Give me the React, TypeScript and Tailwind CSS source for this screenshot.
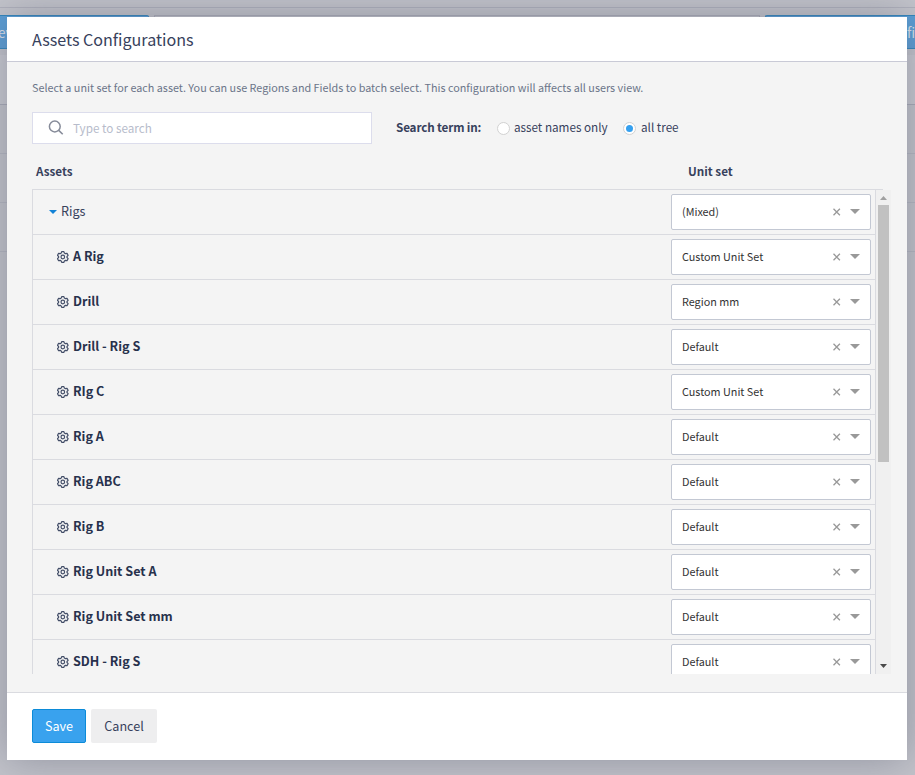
import React from "react";

type Asset = { name: string; unit: string };

const assets: Asset[] = [
  { name: "A Rig", unit: "Custom Unit Set" },
  { name: "Drill", unit: "Region mm" },
  { name: "Drill - Rig S", unit: "Default" },
  { name: "RIg C", unit: "Custom Unit Set" },
  { name: "Rig A", unit: "Default" },
  { name: "Rig ABC", unit: "Default" },
  { name: "Rig B", unit: "Default" },
  { name: "Rig Unit Set A", unit: "Default" },
  { name: "Rig Unit Set mm", unit: "Default" },
  { name: "SDH - Rig S", unit: "Default" },
];

function GearIcon() {
  return (
    <svg className="mt-px h-3 w-3 shrink-0" viewBox="0 0 12 12" fill="none" stroke="#434e68" strokeWidth="1.2" strokeLinejoin="round">
      <path d="M4.700.6h2.200l.5 1.500 1 .6 1.600-.4 1.100 2-1.100 1.200v1l1.100 1.200-1.100 2-1.600-.4-1 .6-.5 1.500H4.700l-.5-1.500-1-.6-1.600.4-1.100-2 1.100-1.200v-1L.5 4.300l1.100-2 1.600.4 1-.6z" />
      <circle cx="5.800" cy="6" r="1.800" />
    </svg>
  );
}

function UnitSelect({ value }: { value: string }) {
  return (
    <div className="flex h-9 w-[200px] shrink-0 items-center rounded-[2px] border border-[#c3c8d3] bg-white pr-[10px] pl-[10px]">
      <span className="flex-1 pb-[2px] text-[10.8px] text-[#333]">{value}</span>
      <svg className="mr-[9px] h-2 w-2" viewBox="0 0 8 8" stroke="#999" strokeWidth="1.3">
        <path d="M.5 .8l6.400 6.400M6.900 .8L.5 7.200" />
      </svg>
      <svg className="mb-px h-[5px] w-[10px]" viewBox="0 0 10 5" fill="#999">
        <path d="M0 0h10L5 5z" />
      </svg>
    </div>
  );
}

function Backdrop() {
  return (
    <div className="absolute inset-0 flex flex-col bg-[#c3c4cb]">
      <div className="h-2 border-b border-[#b0b1bc]" />
      <div className="mt-[7px] flex h-[34px] text-[13.5px] text-[#dfe3ec]">
        <div className="flex w-[149px] shrink-0 items-center rounded-r-[2px] border border-l-0 border-[#3186bd] bg-[#5a9ed6] pb-px">
          <span className="-ml-[2px]">ew</span>
        </div>
        <div className="mx-[5px] w-[606px] shrink-0 border border-[#abacb7]" />
        <div className="flex w-[150px] shrink-0 items-center justify-end rounded-l-[2px] border border-r-0 border-[#3186bd] bg-[#5a9ed6] pb-px">fi</div>
      </div>
      <div className="mt-[6px] h-[50px] border-b border-[#a9abb7] bg-[#c9cad1]" />
      <div className="h-[49px] border-b border-[#b5b7c1]" />
      <div className="h-[49px] border-b border-[#b5b7c1]" />
      <div className="h-[49px] border-b border-[#b5b7c1]" />
    </div>
  );
}

export default function App() {
  return (
    <div className="relative h-[775px] w-[915px] overflow-hidden font-['Noto_Sans_CJK_SC',sans-serif] text-[12.6px] leading-5 text-[#37415c]">
      <Backdrop />
      <div className="absolute top-[17px] left-[7px] flex h-[743px] w-[900px] flex-col bg-white shadow-[0_0_40px_rgba(80,85,105,0.45)]">
        <header className="flex h-[45px] shrink-0 items-center border-b border-[#c9cad6] px-[25px] text-[16.1px]">
          Assets Configurations
        </header>
        <main className="flex flex-1 flex-col bg-[#f4f4f4] pl-[25px]">
          <p className="mt-[15px] text-[10.8px] text-[#6b7489]">
            Select a unit set for each asset. You can use Regions and Fields to batch select. This configuration will affects all users view.
          </p>
          <div className="mt-[15px] flex h-8 items-center text-[11.7px]">
            <div className="flex h-8 w-[340px] items-center border border-[#dcddec] bg-white pl-[15px] text-[#b7bccb]">
              <svg className="mr-[9px] h-4 w-4" viewBox="0 0 16 16" fill="none" stroke="#868b99" strokeWidth="1.5">
                <circle cx="6.800" cy="6.500" r="5.400" />
                <path d="M10.700 10.400l4 3.900" />
              </svg>
              Type to search
            </div>
            <span className="ml-6 w-[85px] pb-[3px] font-bold tracking-[-0.15px] whitespace-nowrap">Search term in:</span>
            <span className="ml-4 h-[13px] w-[13px] rounded-full border border-[#d2d2d2] bg-white" />
            <span className="ml-1 w-[93px] pb-[3px] whitespace-nowrap">asset names only</span>
            <span className="ml-4 flex h-[13px] w-[13px] items-center justify-center rounded-full border border-[#d2d2d2] bg-white">
              <span className="h-[7px] w-[7px] rounded-full bg-[#35a0ef]" />
            </span>
            <span className="ml-[5px] pb-[3px]">all tree</span>
          </div>
          <div className="mt-[17px] flex h-7 pl-1 text-[11.7px] font-bold">
            <span className="w-[652px]">Assets</span>
            <span>Unit set</span>
          </div>
          <div className="relative flex h-[485px] w-[859px] overflow-hidden">
            <div className="w-[844px] shrink-0 border-x border-[#dadbe0]">
              <div className="flex h-[45px] items-center justify-between border-t border-[#dadbe0] pr-1 pl-4">
                <div className="flex items-center pb-[2px]">
                  <svg className="mt-[2px] mr-1 h-1 w-2" viewBox="0 0 8 4" fill="#1282d6"><path d="M0 0h8L4 4z" /></svg>
                  Rigs
                </div>
                <UnitSelect value="(Mixed)" />
              </div>
              {assets.map((a) => (
                <div key={a.name} className="flex h-[45px] items-center justify-between border-t border-[#dadbe0] pr-1 pl-6">
                  <div className="flex items-center gap-1 pb-[2px] font-bold text-[#27314c]">
                    <GearIcon />
                    {a.name}
                  </div>
                  <UnitSelect value={a.unit} />
                </div>
              ))}
            </div>
            <div className="flex flex-1 flex-col items-center bg-[#f0f0f0]">
              <div className="h-px w-full bg-[#f4f4f4]"><div className="h-px w-[7px] bg-[#dadbe0]" /></div>
              <svg className="mt-[6px] h-1 w-[7px]" viewBox="0 0 7 4" fill="#a0a0a0"><path d="M0 4h7L3.500 0z" /></svg>
              <div className="mt-[5px] h-[257px] w-[11px] bg-[#c1c1c1]" />
              <svg className="mt-auto mb-[6px] h-1 w-[7px]" viewBox="0 0 7 4" fill="#4a4a4a"><path d="M0 0h7L3.500 4z" /></svg>
            </div>
          </div>
        </main>
        <footer className="flex h-[68px] shrink-0 items-center gap-[5px] border-t border-[#dadbe0] px-[25px] pb-px">
          <button className="h-[34px] w-[54px] rounded-[2px] border border-[#0c8bd8] bg-[#39a2ee] text-white">Save</button>
          <button className="h-[34px] w-[66px] rounded-[2px] bg-[#eeeeef]">Cancel</button>
        </footer>
      </div>
    </div>
  );
}
